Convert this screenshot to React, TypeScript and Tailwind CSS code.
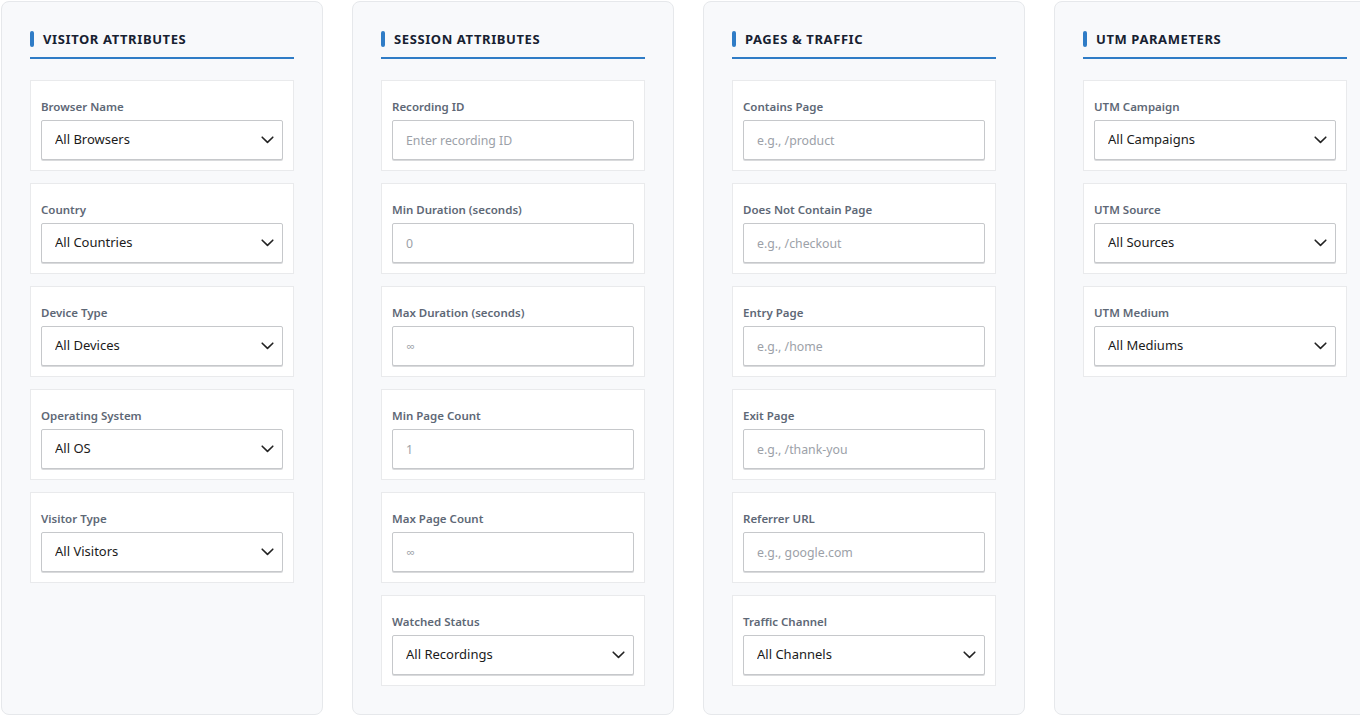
import React from 'react';

type Field = {
    label: string;
    kind: 'select' | 'input';
    value: string;
};

type Section = {
    title: string;
    fields: Field[];
};

const sections: Section[] = [
    {
        title: 'Visitor Attributes',
        fields: [
            { label: 'Browser Name', kind: 'select', value: 'All Browsers' },
            { label: 'Country', kind: 'select', value: 'All Countries' },
            { label: 'Device Type', kind: 'select', value: 'All Devices' },
            { label: 'Operating System', kind: 'select', value: 'All OS' },
            { label: 'Visitor Type', kind: 'select', value: 'All Visitors' },
        ],
    },
    {
        title: 'Session Attributes',
        fields: [
            { label: 'Recording ID', kind: 'input', value: 'Enter recording ID' },
            { label: 'Min Duration (seconds)', kind: 'input', value: '0' },
            { label: 'Max Duration (seconds)', kind: 'input', value: '∞' },
            { label: 'Min Page Count', kind: 'input', value: '1' },
            { label: 'Max Page Count', kind: 'input', value: '∞' },
            { label: 'Watched Status', kind: 'select', value: 'All Recordings' },
        ],
    },
    {
        title: 'Pages & Traffic',
        fields: [
            { label: 'Contains Page', kind: 'input', value: 'e.g., /product' },
            { label: 'Does Not Contain Page', kind: 'input', value: 'e.g., /checkout' },
            { label: 'Entry Page', kind: 'input', value: 'e.g., /home' },
            { label: 'Exit Page', kind: 'input', value: 'e.g., /thank-you' },
            { label: 'Referrer URL', kind: 'input', value: 'e.g., google.com' },
            { label: 'Traffic Channel', kind: 'select', value: 'All Channels' },
        ],
    },
    {
        title: 'UTM Parameters',
        fields: [
            { label: 'UTM Campaign', kind: 'select', value: 'All Campaigns' },
            { label: 'UTM Source', kind: 'select', value: 'All Sources' },
            { label: 'UTM Medium', kind: 'select', value: 'All Mediums' },
        ],
    },
];

const Chevron: React.FC = () => (
    <svg width="13" height="8" viewBox="0 0 13 8" fill="none" className="shrink-0">
        <path d="M1.2 1.2 L6.5 6.4 L11.8 1.2" stroke="#222" strokeWidth="1.6" strokeLinecap="round" strokeLinejoin="round" />
    </svg>
);

const FilterField: React.FC<{ field: Field }> = ({ field }) => (
    <div className="bg-white border border-[#e9eaec] px-[10px] pt-[18px] pb-[10px]">
        <label className="block text-[11.5px] leading-4 font-semibold text-[#5e6876] mb-[5px]">{field.label}</label>
        {field.kind === 'select' ? (
            <div className="flex items-center h-10 border border-[#c6c8cb] rounded-[2px] bg-white pl-[13px] pr-[8px] shadow-[0_1px_0_#d9dadc]">
                <select
                    defaultValue={field.value}
                    className="flex-1 appearance-none bg-transparent outline-none text-[13px] text-[#1b1b1b]"
                >
                    <option>{field.value}</option>
                </select>
                <Chevron />
            </div>
        ) : (
            <input
                type="text"
                placeholder={field.value}
                className="block w-full h-10 border border-[#c6c8cb] rounded-[2px] bg-white px-[13px] text-[12.3px] text-[#1b1b1b] placeholder:text-[#9ca1a8] outline-none shadow-[0_1px_0_#d9dadc]"
            />
        )}
    </div>
);

const FilterPanel: React.FC<{ section: Section }> = ({ section }) => (
    <div className="w-[322px] shrink-0 bg-[#f8f9fb] border border-[#e6e8eb] rounded-[8px] px-[28px] pt-[27px] pb-[28px]">
        <div className="flex items-center gap-[9px] pb-[8px] border-b-2 border-[#2f7cc6] mb-[21px]">
            <span className="w-[4px] h-[16px] rounded-full bg-[#2f7cc6]" />
            <h3 className="text-[13px] leading-5 font-bold uppercase tracking-[0.6px] text-[#172131]">{section.title}</h3>
        </div>
        <div className="flex flex-col gap-3">
            {section.fields.map((f) => (
                <FilterField key={f.label} field={f} />
            ))}
        </div>
    </div>
);

export default function App() {
    return (
        <div
            className="bg-white w-[1360px] h-[716px] overflow-hidden pl-px pt-px"
            style={{ fontFamily: '"Noto Sans", "Open Sans", sans-serif' }}
        >
            <div className="flex items-stretch gap-[29px]">
                {sections.map((s) => (
                    <FilterPanel key={s.title} section={s} />
                ))}
            </div>
        </div>
    );
}
